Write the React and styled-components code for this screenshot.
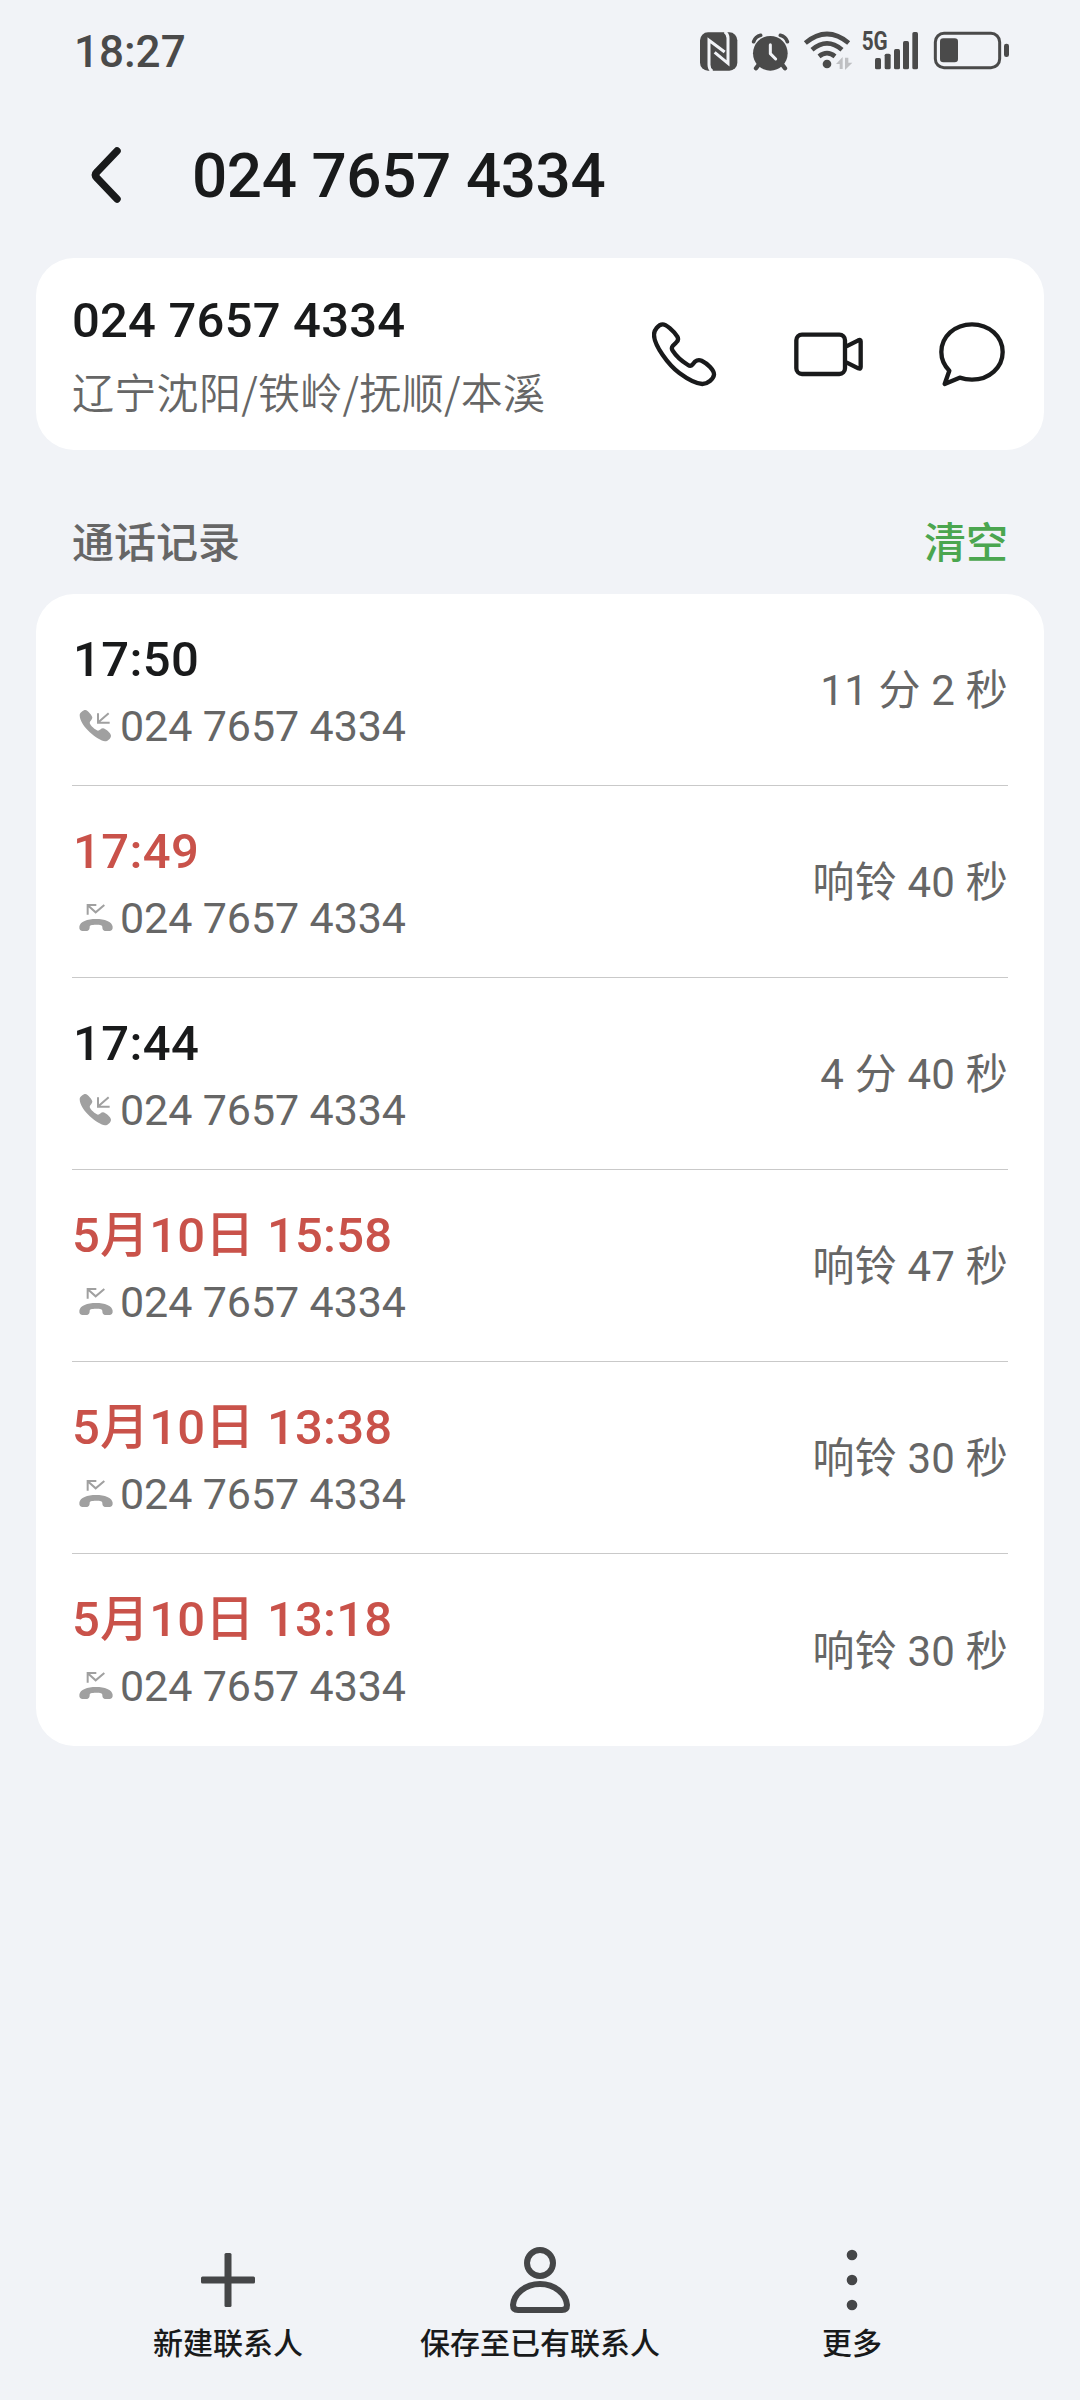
import React from "react";
import styled, { createGlobalStyle } from "styled-components";

const GlobalStyle = createGlobalStyle`
  * {
    box-sizing: border-box;
  }
  body {
    margin: 0;
    background: #f1f3f7;
    font-family: Roboto, "Noto Sans CJK SC", sans-serif;
  }
`;

const Screen = styled.div`
  width: 1080px;
  height: 2400px;
  display: flex;
  flex-direction: column;
  background: #f1f3f7;
  color: #191a1b;
  overflow: hidden;
`;

const StatusBar = styled.div`
  height: 102px;
  padding: 0 71px 0 74px;
  display: flex;
  align-items: center;
  justify-content: space-between;
`;

const Clock = styled.span`
  padding-top: 1px;
  font-size: 44px;
  font-weight: 500;
  line-height: 52px;
  color: #4a4a4a;
`;

const StatusIcon = styled.svg`
  display: block;
  width: 309px;
  height: 58px;
`;

const Header = styled.header`
  height: 156px;
  padding: 0 91px 11px;
  display: flex;
  align-items: center;
`;

const BackIcon = styled.svg`
  width: 30px;
  height: 56px;
`;

const Title = styled.h1`
  margin: 2px 0 0 71px;
  font-size: 62px;
  font-weight: 500;
  line-height: 72px;
  letter-spacing: -0.4px;
`;

const Card = styled.section`
  margin: 0 36px;
  padding: 0 36px;
  background: #fff;
  border-radius: 38px;
`;

const ContactCard = styled(Card)`
  height: 192px;
  display: flex;
  justify-content: space-between;
`;

const ContactInfo = styled.div`
  padding-top: 34px;
`;

const ContactNumber = styled.div`
  font-size: 49px;
  font-weight: 500;
  line-height: 58px;
  letter-spacing: 0.2px;
`;

const Region = styled.div`
  margin-top: 12px;
  font-size: 42px;
  font-weight: 350;
  line-height: 58px;
  letter-spacing: 0.3px;
  color: #666;
  font-family: "Noto Sans CJK SC", sans-serif;
`;

const Actions = styled.div`
  padding-right: 3px;
  display: flex;
  align-items: center;
  gap: 76px;

  svg {
    display: block;
    fill: none;
    stroke: #191a1b;
    stroke-width: 13;
    stroke-linejoin: round;
  }
`;

const SectionHead = styled.div`
  height: 144px;
  padding: 60px 72px 0;
  display: flex;
  justify-content: space-between;
  font-size: 42px;
  font-weight: 500;
  line-height: 60px;
  color: #666;
  font-family: "Noto Sans CJK SC", sans-serif;
`;

const Clear = styled.span`
  color: #4ba64f;
`;

const Row = styled.div`
  height: 192px;
  padding-top: 2px;
  display: flex;
  align-items: center;
  justify-content: space-between;
  border-bottom: 1px solid #c9c9c9;

  &:last-child {
    border-bottom: 0;
  }
`;

const When = styled.div`
  height: 60px;
  padding-left: ${(props) => (props.$dated ? "0" : "1px")};
  font-size: 49px;
  font-weight: 500;
  line-height: 60px;
  letter-spacing: ${(props) => (props.$dated ? "0.2px" : "0.4px")};
  white-space: nowrap;
  color: ${(props) => (props.$missed ? "#c9524a" : "#191a1b")};
`;

const Line = styled.div`
  margin-top: 10px;
  padding-left: 6px;
  display: flex;
  align-items: center;
  font-size: 43px;
  line-height: 52px;
  letter-spacing: -0.1px;
  color: #666;

  svg {
    display: block;
    width: 36px;
    height: 36px;
    margin-right: 6px;
  }
`;

const Duration = styled.div`
  padding-top: 1px;
  font-size: 42px;
  font-weight: 400;
  line-height: 60px;
  letter-spacing: 0.2px;
  white-space: nowrap;
  color: #666;
`;

const BottomBar = styled.nav`
  margin-top: auto;
  height: 160px;
  padding: 0 72px;
  display: grid;
  grid-template-columns: repeat(3, 312px);
`;

const Tab = styled.div`
  display: flex;
  flex-direction: column;
  align-items: center;
  font-size: 30px;
  font-weight: 500;
  line-height: 44px;
  font-family: "Noto Sans CJK SC", sans-serif;

  svg {
    display: block;
    width: 72px;
    height: 72px;
    margin: 4px 0 3px;
    fill: none;
    stroke: #454648;
    stroke-width: 6;
  }
`;

const calls = [
  { when: "17:50", duration: "11 分 2 秒" },
  { when: "17:49", duration: "响铃 40 秒", missed: true },
  { when: "17:44", duration: "4 分 40 秒" },
  { when: "5月10日 15:58", duration: "响铃 47 秒", missed: true },
  { when: "5月10日 13:38", duration: "响铃 30 秒", missed: true },
  { when: "5月10日 13:18", duration: "响铃 30 秒", missed: true },
];

const StatusIcons = () => (
  <StatusIcon viewBox="60 36 927 174">
    {/* nfc */}
    <rect x="60" y="67" width="112" height="115" rx="24" fill="#4a4a4a" />
    <path
      d="M97 184 Q87 178 87 164 V91 L134 126 M134 65 Q144 72 144 84 V160 L104 127"
      fill="none"
      stroke="#f1f3f7"
      strokeWidth="9"
    />
    {/* alarm */}
    <g fill="none" stroke="#4a4a4a" strokeLinecap="round">
      <circle cx="271" cy="130" r="52" fill="#4a4a4a" stroke="none" />
      <path d="M221 95 Q226 80 242 76 M322 95 Q317 80 301 76" strokeWidth="11" />
      <path d="M236 164 L228 175 M307 164 L315 175" strokeWidth="13" />
      <path d="M271 104 V131 L287 147" stroke="#f1f3f7" strokeWidth="9" strokeLinejoin="round" />
    </g>
    {/* wifi */}
    <g fill="none" stroke="#4a4a4a" strokeWidth="14">
      <path d="M376 99 Q441 45 506 99" />
      <path d="M396 119 Q441 81 486 119" />
      <path d="M417 139 Q441 120 465 139" />
      <circle cx="441" cy="162" r="13" fill="#4a4a4a" stroke="none" />
    </g>
    <path d="M468 162 L488 141 V177 H479 V162 Z M517 158 L495 180 V143 H505 V158 Z" fill="#bfc0c3" />
    {/* signal */}
    <text x="545" y="121" fontSize="75" fontWeight="700" textLength="78" lengthAdjust="spacingAndGlyphs" fill="#4a4a4a">
      5G
    </text>
    <g fill="#4a4a4a">
      <rect x="585" y="144" width="18" height="34" rx="5" />
      <rect x="614" y="131" width="18" height="47" rx="5" />
      <rect x="642" y="117" width="18" height="61" rx="5" />
      <rect x="669" y="93" width="18" height="85" rx="5" />
      <rect x="697" y="66" width="17" height="112" rx="5" />
    </g>
    {/* battery */}
    <rect x="766" y="70" width="193" height="103" rx="26" fill="none" stroke="#4a4a4a" strokeWidth="9" />
    <rect x="780" y="85" width="54" height="72" rx="10" fill="#4a4a4a" />
    <rect x="972" y="101" width="15" height="40" rx="7" fill="#4a4a4a" />
  </StatusIcon>
);

const AnsweredIcon = () => (
  <svg viewBox="147 652 108 108">
    <path
      d="M152 674 C152 666 163 658 169 658 C177 659 189 675 190 680 C191 686 182 692 182 697 C184 705 199 718 207 720 C212 720 216 713 222 713 C230 714 245 727 246 735 C246 743 236 752 228 752 C207 750 153 708 152 674 Z"
      fill="#a0a0a0"
    />
    <path d="M207 668 V696 H242 M208 695 L239 668" fill="none" stroke="#a0a0a0" strokeWidth="6" />
  </svg>
);

const MissedIcon = () => (
  <svg viewBox="54 300 108 108">
    <path
      d="M58 380 C60 365 82 357 108 357 C134 357 156 365 158 380 C159 389 154 393 148 393 H138 C129 393 127 388 127 381 C127 376 122 374 108 374 C94 374 89 376 89 381 C89 388 87 393 78 393 H68 C62 393 57 389 58 380 Z"
      fill="#a0a0a0"
    />
    <path d="M83 344 V315 H109 M85 317 L107 337 L133 315" fill="none" stroke="#a0a0a0" strokeWidth="6" />
  </svg>
);

const App = () => {
  return (
    <Screen>
      <GlobalStyle />
      <StatusBar>
        <Clock>18:27</Clock>
        <StatusIcons />
      </StatusBar>
      <Header>
        <BackIcon viewBox="0 0 30 56">
          <path
            d="M26 4 L6 25 Q3 28 6 31 L26 52"
            fill="none"
            stroke="#191a1b"
            strokeWidth="7.5"
            strokeLinecap="round"
          />
        </BackIcon>
        <Title>024 7657 4334</Title>
      </Header>

      <ContactCard>
        <ContactInfo>
          <ContactNumber>024 7657 4334</ContactNumber>
          <Region>辽宁沈阳/铁岭/抚顺/本溪</Region>
        </ContactInfo>
        <Actions>
          <svg width="66" height="65" viewBox="96 95 198 195">
            <path d="M102 133 C102 120 115 102 128 102 C138 102 160 120 172 139 C176 146 174 152 168 157 L158 167 C154 172 155 176 158 181 C168 197 186 213 204 224 C210 228 214 227 218 222 L225 214 C232 208 238 208 245 211 C262 219 283 240 282 253 C281 266 262 281 247 281 C232 280 205 268 178 248 C145 223 102 165 102 133 Z" />
          </svg>
          <svg width="69" height="65" viewBox="523 95 207 195">
            <rect x="530" y="133" width="146" height="118" rx="17" />
            <path d="M680 168 L716 150 Q723 147 723 153 V230 Q723 237 716 234 L680 216" />
          </svg>
          <svg width="66" height="65" viewBox="957 95 198 195">
            <path d="M988 241 C972 225 964 206 964 185 C964 139 1004 102 1056 102 S1148 139 1148 185 S1108 268 1056 268 C1043 268 1031 266 1019 262 L974 281 Z" />
          </svg>
        </Actions>
      </ContactCard>

      <SectionHead>
        <span>通话记录</span>
        <Clear>清空</Clear>
      </SectionHead>

      <Card>
        {calls.map((call) => (
          <Row key={call.when}>
            <div>
              <When $missed={call.missed} $dated={call.when.includes("月")}>
                {call.when}
              </When>
              <Line>
                {call.missed ? <MissedIcon /> : <AnsweredIcon />}
                024 7657 4334
              </Line>
            </div>
            <Duration>{call.duration}</Duration>
          </Row>
        ))}
      </Card>

      <BottomBar>
        <Tab>
          <svg viewBox="0 0 72 72">
            <rect x="32.5" y="9" width="7" height="54" rx="1.5" fill="#454648" stroke="none" />
            <rect x="9" y="32.5" width="54" height="7" rx="1.5" fill="#454648" stroke="none" />
          </svg>
          新建联系人
        </Tab>
        <Tab>
          <svg viewBox="0 0 72 72">
            <ellipse cx="36" cy="19" rx="13" ry="13" />
            <path d="M36 40 C51 40 62 50 63 61 Q63 66 58 66 H14 Q9 66 9 61 C10 50 21 40 36 40 Z" />
          </svg>
          保存至已有联系人
        </Tab>
        <Tab>
          <svg viewBox="0 0 72 72">
            <g fill="#454648" stroke="none">
              <circle cx="36" cy="11" r="5.3" />
              <circle cx="36" cy="36" r="5.3" />
              <circle cx="36" cy="61" r="5.3" />
            </g>
          </svg>
          更多
        </Tab>
      </BottomBar>
    </Screen>
  );
};

export default App;
